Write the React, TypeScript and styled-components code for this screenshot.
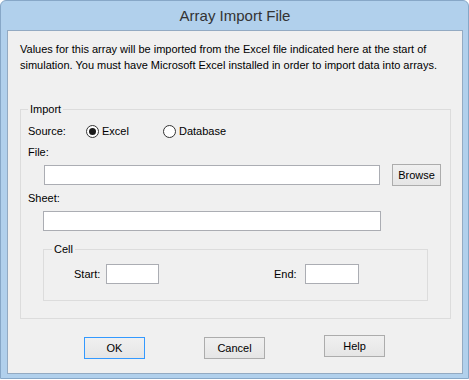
import React from "react";
import styled, { createGlobalStyle } from "styled-components";

const Global = createGlobalStyle`
  html, body { margin: 0; padding: 0; background: #ffffff; }
  body {
    font-family: "Liberation Sans", Arial, sans-serif;
    font-size: 11px;
    color: #000;
  }
  * { box-sizing: border-box; }
`;

const Window = styled.div`
  width: 469px;
  height: 379px;
  border: 1px solid #87a7c7;
  border-radius: 6px 6px 0 0;
  background: #b1d0ec;
  padding: 0 5px 4px 6px;
  display: flex;
  flex-direction: column;
`;

const TitleBar = styled.div`
  height: 29px;
  line-height: 29px;
  text-align: center;
  font-size: 15px;
  color: #333333;
`;

const Panel = styled.div`
  flex: 1;
  border: 1px solid #93aac2;
  background: #f0f0f0;
  padding: 10px 11px 0 12px;
  display: flex;
  flex-direction: column;
`;

const Description = styled.p`
  margin: 0;
  line-height: 16px;
  white-space: nowrap;
`;

const GroupBox = styled.fieldset<{ $mt: number; $ml?: number; $width?: number; $pad: string }>`
  margin: ${(p) => p.$mt}px 0 0 ${(p) => p.$ml ?? 0}px;
  ${(p) => (p.$width ? `width: ${p.$width}px;` : "")}
  min-width: 0;
  border: 1px solid #dcdcdc;
  padding: ${(p) => p.$pad};
  display: flex;
  flex-direction: column;
`;

const Legend = styled.legend`
  padding: 0 2px;
  line-height: 14px;
`;

const SourceRow = styled.div`
  display: grid;
  grid-template-columns: 58px 77px auto;
  height: 16px;
  line-height: 16px;
  align-items: center;
`;

const RadioOption = styled.label`
  display: inline-flex;
  align-items: center;
  gap: 3px;
`;

const RadioCircle = styled.span<{ $checked?: boolean }>`
  position: relative;
  width: 13px;
  height: 13px;
  border-radius: 50%;
  border: 1px solid #333333;
  background: #ffffff;
  flex: none;
  &::after {
    content: "";
    display: ${(p) => (p.$checked ? "block" : "none")};
    position: absolute;
    left: 2px;
    top: 2px;
    width: 7px;
    height: 7px;
    border-radius: 50%;
    background: #1a1a1a;
  }
`;

const FieldLabel = styled.div<{ $mt: number }>`
  line-height: 16px;
  margin-top: ${(p) => p.$mt}px;
`;

const InputRow = styled.div<{ $ml: number }>`
  display: flex;
  align-items: center;
  gap: 12px;
  height: 22px;
  margin-top: 4px;
  margin-left: ${(p) => p.$ml}px;
`;

const TextBox = styled.input<{ $width: number }>`
  width: ${(p) => p.$width}px;
  height: 20px;
  border: 1px solid #abadb3;
  background: #ffffff;
  padding: 0 2px;
  margin: 0;
  font: inherit;
  outline: none;
  flex: none;
`;

const Button = styled.button<{ $width: number; $primary?: boolean; $lift?: number }>`
  width: ${(p) => p.$width}px;
  height: 22px;
  margin: ${(p) => -(p.$lift ?? 0)}px 0 0 0;
  padding: 0;
  border: 1px solid ${(p) => (p.$primary ? "#3399ff" : "#acacac")};
  background: linear-gradient(#f0f0f0, #e5e5e5);
  font: inherit;
  color: #000;
  flex: none;
`;

const CellRow = styled.div`
  display: grid;
  grid-template-columns: 200px auto;
  margin-left: 22px;
  height: 20px;
`;

const CellField = styled.div`
  display: flex;
  align-items: center;
`;

const CellLabel = styled.span<{ $w: number }>`
  width: ${(p) => p.$w}px;
  line-height: 16px;
`;

const ButtonRow = styled.div`
  display: flex;
  align-items: flex-start;
  gap: 59px;
  margin: 18px 0 0 64px;
`;

export default function App() {
  return (
    <>
      <Global />
      <Window>
        <TitleBar>Array Import File</TitleBar>
        <Panel>
          <Description>
            Values for this array will be imported from the Excel file indicated here at the start of
            <br />
            simulation. You must have Microsoft Excel installed in order to import data into arrays.
          </Description>
          <GroupBox $mt={29} $pad="7px 0 17px 7px">
            <Legend>Import</Legend>
            <SourceRow>
              <span>Source:</span>
              <RadioOption>
                <RadioCircle $checked />
                Excel
              </RadioOption>
              <RadioOption>
                <RadioCircle />
                Database
              </RadioOption>
            </SourceRow>
            <FieldLabel $mt={5}>File:</FieldLabel>
            <InputRow $ml={16}>
              <TextBox $width={336} />
              <Button $width={49}>Browse</Button>
            </InputRow>
            <FieldLabel $mt={4}>Sheet:</FieldLabel>
            <InputRow $ml={15}>
              <TextBox $width={338} />
            </InputRow>
            <GroupBox $mt={10} $ml={15} $width={385} $pad="8px 0 16px 8px">
              <Legend>Cell</Legend>
              <CellRow>
                <CellField>
                  <CellLabel $w={32}>Start:</CellLabel>
                  <TextBox $width={53} />
                </CellField>
                <CellField>
                  <CellLabel $w={31}>End:</CellLabel>
                  <TextBox $width={54} />
                </CellField>
              </CellRow>
            </GroupBox>
          </GroupBox>
          <ButtonRow>
            <Button $width={61} $primary>OK</Button>
            <Button $width={61}>Cancel</Button>
            <Button $width={61} $lift={2}>Help</Button>
          </ButtonRow>
        </Panel>
      </Window>
    </>
  );
}
